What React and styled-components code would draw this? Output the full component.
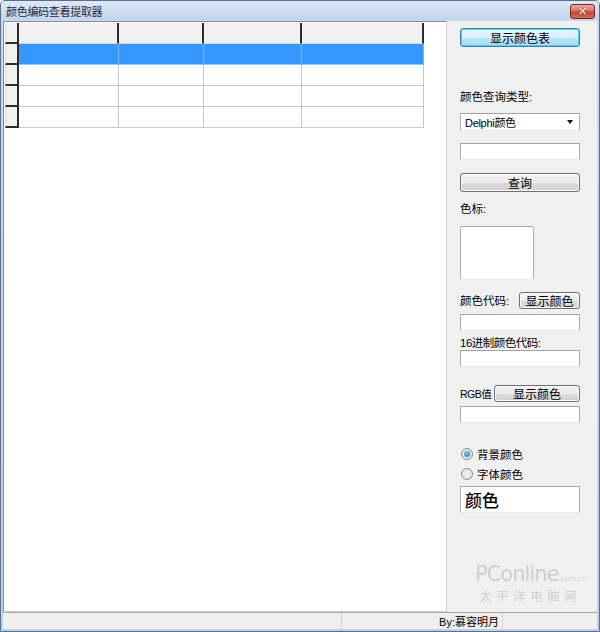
import styled, { createGlobalStyle, css } from "styled-components";

const GlobalStyle = createGlobalStyle`
html, body {
    margin: 0;
    padding: 0;
    background: #fff;
}
body {
    font-family: "Liberation Sans", "Noto Sans CJK SC", sans-serif;
    font-size: 12px;
    color: #000;
}
* { box-sizing: border-box; }
`

const Window = styled.div`
width: 600px;
height: 632px;
display: flex;
flex-direction: column;
background: linear-gradient(#c9dbef, #bcd1ea);
border: 1px solid #5a6f8c;
border-radius: 5px 5px 0 0;
overflow: hidden;
position: relative;
`

const TitleBar = styled.div`
height: 19px;
flex: none;
display: flex;
align-items: center;
justify-content: space-between;
padding: 0 4px 0 5px;
background: linear-gradient(#dce8f6, #c2d5ec);

.title {
    font-size: 11px;
    color: #1e2a3a;
    letter-spacing: -0.3px;
}
`

const CloseButton = styled.div`
width: 25px;
height: 15px;
margin-top: 2px;
border: 1px solid #6d2b22;
border-radius: 3px;
background: linear-gradient(#eeaa9c 0%, #d9725f 48%, #c4412d 52%, #d4705a 100%);
display: flex;
align-items: center;
justify-content: center;
color: #fff;
font-size: 11px;
font-weight: bold;
font-family: "DejaVu Sans", sans-serif;
text-shadow: 0 0 2px #5b1a10;
`

const Client = styled.div`
flex: 1;
display: flex;
margin: 1px 2px 0 2px;
background: #f0f0f0;
min-height: 0;
`

const GridPanel = styled.div`
width: 444px;
flex: none;
background: #fff;
border-top: 1px solid #8a8a8a;
border-left: 1px solid #8a8a8a;
border-right: 1px solid #d0d0d0;
border-bottom: 1px solid #d0d0d0;
padding: 1px 0 0 1px;
`

const Grid = styled.div`
display: grid;
grid-template-columns: 14px 100px 85px 98px 122px;
grid-auto-rows: 21px;
width: max-content;
`

const Cell = styled.div`
border-right: 1px solid #c8c8c8;
border-bottom: 1px solid #c8c8c8;
background: #fff;
${p => p.$fixed && css`
    background: #f0f0f0;
    border-right: 2px solid #2b2b2b;
    border-bottom: ${p.$header ? "1px solid #d8d8d8" : "2px solid #2b2b2b"};
    border-left: ${p.$header ? "none" : "1px solid #dcdcdc"};
`}
${p => p.$selected && css`
    background: #3399ff;
    border-right: 1px solid #7ab8f5;
    border-bottom: 1px solid #9ac6f2;
`}
`

const SidePanel = styled.div`
flex: 1;
display: flex;
flex-direction: column;
padding: 7px 17px 0 13px;
`

const Button = styled.div`
height: ${p => p.$h || 19}px;
width: ${p => p.$w ? `${p.$w}px` : "100%"};
margin-left: ${p => p.$w ? "auto" : "0"};
border: 1px solid #707070;
border-radius: 3px;
background: linear-gradient(#f2f2f2 0%, #ebebeb 50%, #dddddd 51%, #cfcfcf 100%);
box-shadow: inset 0 0 0 1px #fcfcfc;
display: flex;
align-items: center;
justify-content: center;
font-size: 12px;
${p => p.$default && css`
    border-color: #3c7fb1;
    box-shadow: inset 0 0 0 1px #48d3f9;
    background: linear-gradient(#eaf6fd 0%, #d9f0fc 50%, #bee6fd 51%, #a7d9f5 100%);
`}
`

const Label = styled.div`
height: 14px;
line-height: 14px;
font-size: ${p => p.$small ? "10.5px" : "11.5px"};
white-space: nowrap;
letter-spacing: ${p => p.$tight ? "-0.5px" : "0"};
`

const Field = styled.div`
height: ${p => p.$h || 17}px;
width: ${p => p.$w ? `${p.$w}px` : "100%"};
background: #fff;
border: 1px solid #abadb3;
border-top-color: #a0a4ab;
border-bottom-color: #e3e9ef;
border-radius: ${p => p.$round ? "2px" : "0"};
display: flex;
align-items: center;
padding-left: 4px;
font-size: ${p => p.$big ? "17px" : "11px"};
font-weight: ${p => p.$big ? 500 : 400};
`

const Combo = styled(Field)`
justify-content: space-between;
padding-right: 6px;
letter-spacing: -0.3px;

.arrow {
    width: 0;
    height: 0;
    border-left: 3.5px solid transparent;
    border-right: 3.5px solid transparent;
    border-top: 4px solid #111;
}
`

const Gap = styled.div`
height: ${p => p.$h}px;
flex: none;
`

const Row = styled.div`
display: flex;
align-items: center;
height: ${p => p.$h || 17}px;
`

const Radio = styled.div`
display: flex;
align-items: center;
gap: 4px;
height: 14px;
font-size: 11.5px;
margin-left: 1px;

.dot {
    width: 12px;
    height: 12px;
    border-radius: 50%;
    border: 1px solid #8e8f8f;
    background: radial-gradient(#f4f4f4, #dcdcdc);
    display: flex;
    align-items: center;
    justify-content: center;
}
.dot::after {
    content: "";
    width: 6px;
    height: 6px;
    border-radius: 50%;
    background: ${p => p.$checked ? "radial-gradient(circle at 40% 35%, #8ad2ff, #1a5fa6)" : "transparent"};
}
`

const StatusBar = styled.div`
height: 17px;
flex: none;
display: flex;
margin: 0 2px;
background: #f1eeee;
border-top: 1px solid #a7a7a7;
font-size: 11px;
`

const StatusPanel = styled.div`
width: ${p => p.$w ? `${p.$w}px` : "auto"};
flex: ${p => p.$w ? "none" : "1"};
border-right: ${p => p.$last ? "none" : "1px solid #d2cfcf"};
display: flex;
align-items: center;
justify-content: flex-end;
padding-right: 3px;
`

const Watermark = styled.div`
position: absolute;
left: 474px;
top: 562px;
color: rgba(150, 150, 150, 0.4);
pointer-events: none;
text-align: center;

.brand {
    font-family: "DejaVu Sans", sans-serif;
    font-size: 21px;
    letter-spacing: -1px;
    line-height: 22px;
}
.brand small {
    font-size: 7px;
    letter-spacing: 0;
}
.cn {
    font-size: 12px;
    letter-spacing: 5px;
    line-height: 14px;
}
`

const columns = 4;
const rows = 4;

export default function App() {
    return (
        <>
            <GlobalStyle />
            <Window>
                <TitleBar>
                    <span className="title">颜色编码查看提取器</span>
                    <CloseButton>✕</CloseButton>
                </TitleBar>
                <Client>
                    <GridPanel>
                        <Grid>
                            <Cell $fixed />
                            {Array.from({ length: columns }).map((_, i) => (
                                <Cell key={`h${i}`} $fixed $header />
                            ))}
                            {Array.from({ length: rows }).map((_, r) => (
                                <>
                                    <Cell key={`f${r}`} $fixed />
                                    {Array.from({ length: columns }).map((_, c) => (
                                        <Cell key={`c${r}-${c}`} $selected={r === 0} />
                                    ))}
                                </>
                            ))}
                        </Grid>
                    </GridPanel>
                    <SidePanel>
                        <Button $default>显示颜色表</Button>
                        <Gap $h={43} />
                        <Label>颜色查询类型:</Label>
                        <Gap $h={9} />
                        <Combo $h={18}>
                            <span>Delphi颜色</span>
                            <span className="arrow" />
                        </Combo>
                        <Gap $h={12} />
                        <Field />
                        <Gap $h={13} />
                        <Button>查询</Button>
                        <Gap $h={10} />
                        <Label>色标:</Label>
                        <Gap $h={10} />
                        <Field $h={54} $w={74} $round />
                        <Gap $h={12} />
                        <Row>
                            <Label>颜色代码:</Label>
                            <Button $w={61} $h={17}>显示颜色</Button>
                        </Row>
                        <Gap $h={5} />
                        <Field />
                        <Gap $h={5} />
                        <Label $tight>16进制颜色代码:</Label>
                        <Gap $h={0} />
                        <Field />
                        <Gap $h={18} />
                        <Row>
                            <Label $tight $small>RGB值</Label>
                            <Button $w={86} $h={17}>显示颜色</Button>
                        </Row>
                        <Gap $h={4} />
                        <Field />
                        <Gap $h={24} />
                        <Radio $checked>
                            <span className="dot" />
                            <span>背景颜色</span>
                        </Radio>
                        <Gap $h={6} />
                        <Radio>
                            <span className="dot" />
                            <span>字体颜色</span>
                        </Radio>
                        <Gap $h={5} />
                        <Field $h={27} $big>颜色</Field>
                    </SidePanel>
                </Client>
                <StatusBar>
                    <StatusPanel $w={339} />
                    <StatusPanel $w={161}>By:慕容明月</StatusPanel>
                    <StatusPanel $last />
                </StatusBar>
                <Gap $h={2} />
                <Watermark>
                    <div className="brand">PConline<small>.com.cn</small></div>
                    <div className="cn">太平洋电脑网</div>
                </Watermark>
            </Window>
        </>
    )
}
